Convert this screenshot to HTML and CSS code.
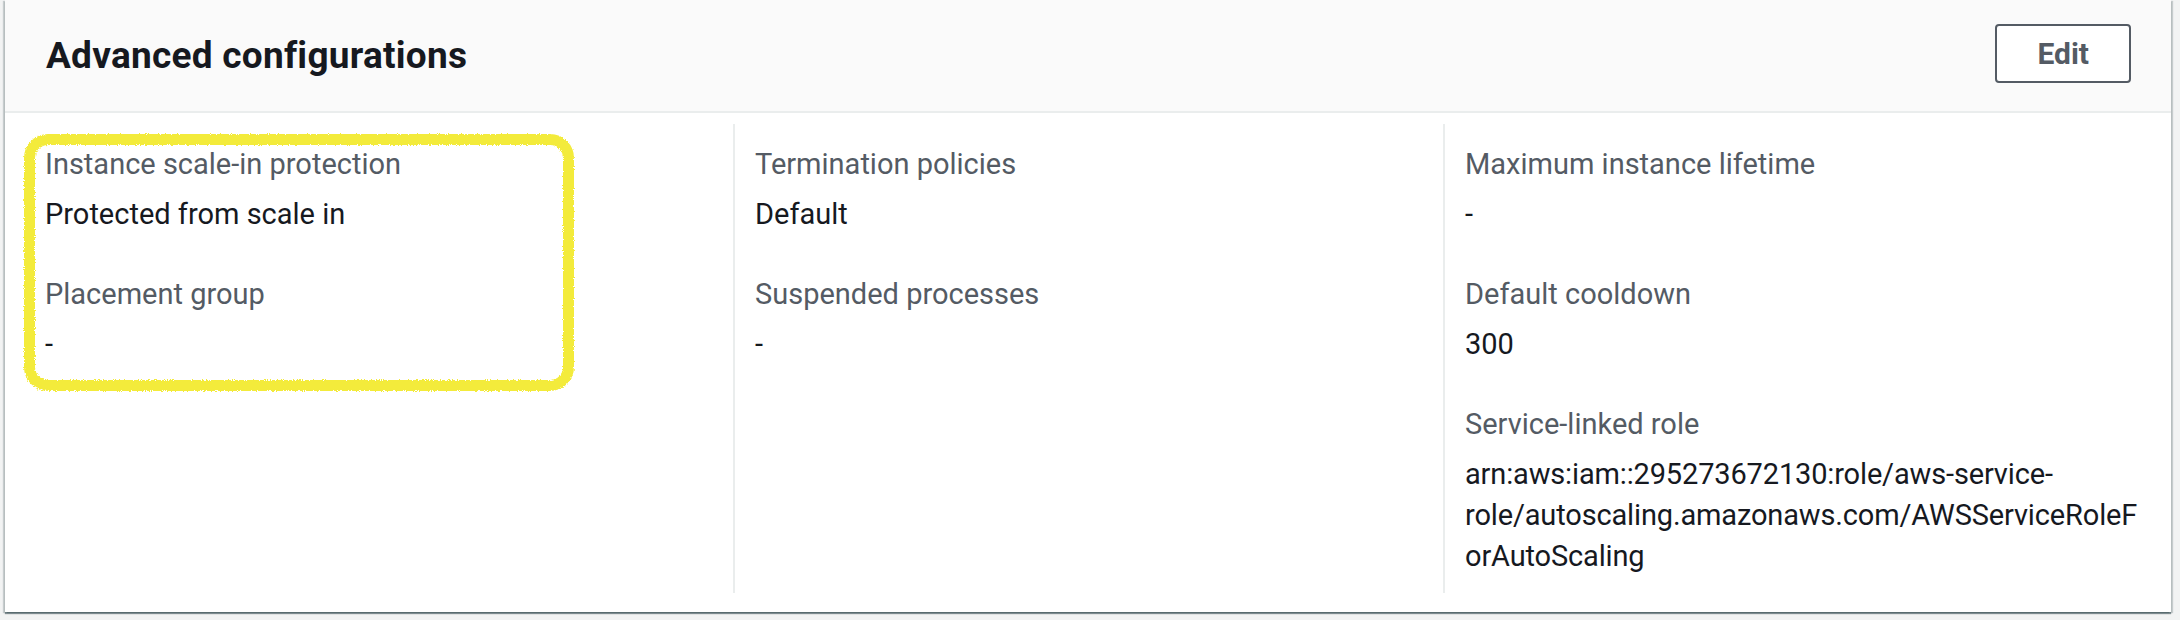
FILE: index.html
```html
<!DOCTYPE html>
<html lang="en">
<head>
<meta charset="utf-8">
<title>Advanced configurations</title>
<link rel="stylesheet" href="styles.css">
</head>
<body>
<svg class="defs" width="0" height="0" aria-hidden="true">
  <filter id="rough" x="-5%" y="-5%" width="110%" height="110%">
    <feTurbulence type="fractalNoise" baseFrequency="0.9" numOctaves="2" seed="3" result="noise"/>
    <feDisplacementMap in="SourceGraphic" in2="noise" scale="4" xChannelSelector="R" yChannelSelector="G"/>
  </filter>
</svg>
<div class="page">
  <section class="card">
    <header class="card-header">
      <h2 class="card-title">Advanced configurations</h2>
      <button class="btn" type="button">Edit</button>
    </header>
    <div class="card-body">
      <div class="columns">
        <div class="col col-first">
          <div class="highlight"></div>
          <div class="kv">
            <div class="kv-label">Instance scale-in protection</div>
            <div class="kv-value">Protected from scale in</div>
          </div>
          <div class="kv">
            <div class="kv-label">Placement group</div>
            <div class="kv-value">-</div>
          </div>
        </div>
        <div class="col">
          <div class="kv">
            <div class="kv-label">Termination policies</div>
            <div class="kv-value">Default</div>
          </div>
          <div class="kv">
            <div class="kv-label">Suspended processes</div>
            <div class="kv-value">-</div>
          </div>
        </div>
        <div class="col">
          <div class="kv">
            <div class="kv-label">Maximum instance lifetime</div>
            <div class="kv-value">-</div>
          </div>
          <div class="kv">
            <div class="kv-label">Default cooldown</div>
            <div class="kv-value">300</div>
          </div>
          <div class="kv">
            <div class="kv-label">Service-linked role</div>
            <div class="kv-value kv-value-arn">arn:aws:iam::295273672130:role/aws-service-<br>role/autoscaling.amazonaws.com/AWSServiceRoleF<br>orAutoScaling</div>
          </div>
        </div>
      </div>
    </div>
  </section>
</div>
</body>
</html>
```

FILE: styles.css
```css
* {
  box-sizing: border-box;
}

html, body {
  margin: 0;
  padding: 0;
}

body {
  background: #f2f3f3;
  font-family: Roboto, "Liberation Sans", Arial, sans-serif;
  color: #16191f;
}

.defs {
  position: absolute;
  width: 0;
  height: 0;
}

.page {
  padding: 0 9px 8px 5px;
}

.card {
  background: #ffffff;
  box-shadow: 0 2px 1px 0 rgba(0, 28, 36, 0.45),
              2px 1px 1px 0 rgba(0, 28, 36, 0.18),
              -2px 1px 1px 0 rgba(0, 28, 36, 0.18);
}

.card-header {
  height: 113px;
  background: #fafafa;
  border-bottom: 2px solid #eaeded;
  display: flex;
  align-items: center;
  justify-content: space-between;
  padding: 0 40px;
}

.card-title {
  margin: 0;
  font-size: 37px;
  font-weight: 700;
  letter-spacing: 0.25px;
  color: #16191f;
  line-height: normal;
  padding-left: 1px;
}

.btn {
  font-family: Roboto, "Liberation Sans", Arial, sans-serif;
  font-size: 30px;
  font-weight: 700;
  color: #545b64;
  background: #ffffff;
  border: 2px solid #545b64;
  border-radius: 4px;
  padding: 0 40px;
  height: 59px;
  line-height: 55px;
  margin-bottom: 4px;
}

.card-body {
  padding: 11px 40px 19px;
}

.columns {
  display: grid;
  grid-template-columns: repeat(3, minmax(0, 1fr));
  margin: 0 -22px;
}

.col {
  position: relative;
  padding: 18px 20px 16px;
  border-left: 2px solid #eaeded;
}

.col-first {
  border-left-color: transparent;
}

.kv + .kv {
  margin-top: 37px;
}

.kv-label {
  font-size: 29px;
  line-height: 44px;
  color: #545b64;
  margin-bottom: 8px;
}

.kv-value {
  font-size: 29px;
  line-height: 41px;
  color: #16191f;
  overflow-wrap: anywhere;
}

.kv-value-arn {
  white-space: nowrap;
  letter-spacing: -0.15px;
}

.highlight {
  position: absolute;
  left: -1px;
  top: 10px;
  width: 550px;
  height: 257px;
  border: 11px solid #f3eb3b;
  border-radius: 24px;
  filter: url(#rough);
  pointer-events: none;
}
```
